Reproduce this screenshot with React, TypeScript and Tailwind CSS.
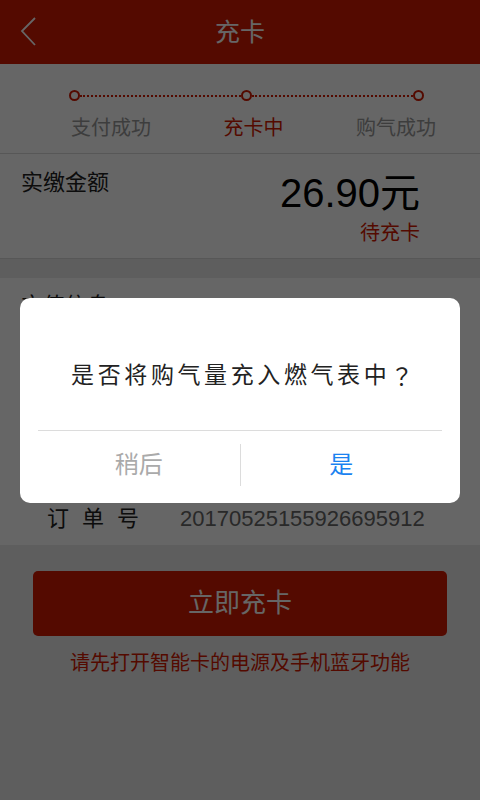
import React from 'react';

const steps = ['支付成功', '充卡中', '购气成功'];

const infoRows = [
  { label: '户名', value: '张**' },
  { label: '卡号', value: '0000125873' },
  { label: '购气量', value: '10.00方' },
  { label: '订单号', value: '20170525155926695912' },
];

const App: React.FC = () => {
  return (
    <div className="relative w-[480px] h-[800px] overflow-hidden bg-[#ebebeb] font-['Liberation_Sans','Noto_Sans_CJK_SC',sans-serif]">
      {/* header */}
      <div className="grid grid-cols-[64px_1fr_64px] items-center h-16 bg-[#d21900] text-white">
        <div className="pl-[20px] flex items-center">
          <svg width="18" height="30" viewBox="0 0 18 30" fill="none">
            <polyline points="15,1 2,14 15,28" stroke="white" strokeWidth="1.8" />
          </svg>
        </div>
        <h1 className="text-center text-[25px] leading-none">充卡</h1>
        <div />
      </div>

      {/* progress */}
      <div className="h-[90px] bg-white border-b border-[#d9d9d9]">
        <div className="flex items-center pl-[69px] pr-[56px] pt-[26px]">
          <span className="w-[11px] h-[11px] rounded-full border-2 border-[#d21900] bg-white" />
          <span className="flex-1 border-t-2 border-dotted border-[#d21900]" />
          <span className="w-[11px] h-[11px] rounded-full border-2 border-[#d21900] bg-white" />
          <span className="flex-1 border-t-2 border-dotted border-[#d21900]" />
          <span className="w-[11px] h-[11px] rounded-full border-2 border-[#d21900] bg-white" />
        </div>
        <div className="flex justify-between pl-[71px] pr-[44px] mt-[15px] text-[20px] leading-[24px]">
          {steps.map((s, i) => (
            <span key={s} className={i === 1 ? 'text-[#d21900]' : 'text-[#999]'}>
              {s}
            </span>
          ))}
        </div>
      </div>

      {/* amount */}
      <div className="h-[105px] bg-white border-b border-[#d9d9d9] flex justify-between pl-[21px] pr-[60px]">
        <div className="pt-[16px] text-[22px] leading-[26px] text-[#222]">实缴金额</div>
        <div className="pt-[15px] flex flex-col items-end">
          <div className="text-[40px] leading-[48px] text-black">26.90元</div>
          <div className="mt-[4px] text-[20px] leading-[24px] text-[#d21900]">待充卡</div>
        </div>
      </div>

      <div className="h-[19px]" />

      {/* info */}
      <div className="h-[267px] bg-white pt-[15px]">
        <div className="pl-[21px] text-[22px] leading-[26px] text-[#222]">充值信息</div>
        <div className="mt-[31px] flex flex-col">
          {infoRows.map((r) => (
            <div key={r.label} className="h-[48px] flex items-center pl-[47px]">
              <span className="w-[133px] text-[22px] tracking-[13px] text-[#222]">{r.label}</span>
              <span className="text-[22px] text-[#666]">{r.value}</span>
            </div>
          ))}
        </div>
      </div>

      {/* action */}
      <div className="px-[33px] mt-[26px]">
        <button className="w-full h-[65px] rounded-[5px] bg-[#d21900] text-white text-[26px]">
          立即充卡
        </button>
      </div>
      <p className="mt-[14px] text-center text-[20px] leading-[26px] text-[#d21900]">
        请先打开智能卡的电源及手机蓝牙功能
      </p>

      {/* dialog overlay */}
      <div className="absolute inset-0 bg-black/60 flex items-center justify-center">
        <div className="w-[440px] h-[205px] bg-white rounded-[10px] flex flex-col">
          <div className="h-[132px] pt-[24px] pl-[8px] flex items-center justify-center text-[23px] tracking-[3.6px] text-[#222]">
            是否将购气量充入燃气表中
            <span className="font-['Noto_Sans_CJK_JP',sans-serif]">？</span>
          </div>
          <div className="mx-[18px] h-px bg-[#dcdcdc]" />
          <div className="mx-[18px] pb-[4px] flex-1 flex items-center">
            <button className="flex-1 text-[24px] text-[#aaa]">稍后</button>
            <span className="w-px h-[42px] bg-[#dcdcdc]" />
            <button className="flex-1 text-[24px] text-[#1a82f0]">是</button>
          </div>
        </div>
      </div>
    </div>
  );
};

export default App;
